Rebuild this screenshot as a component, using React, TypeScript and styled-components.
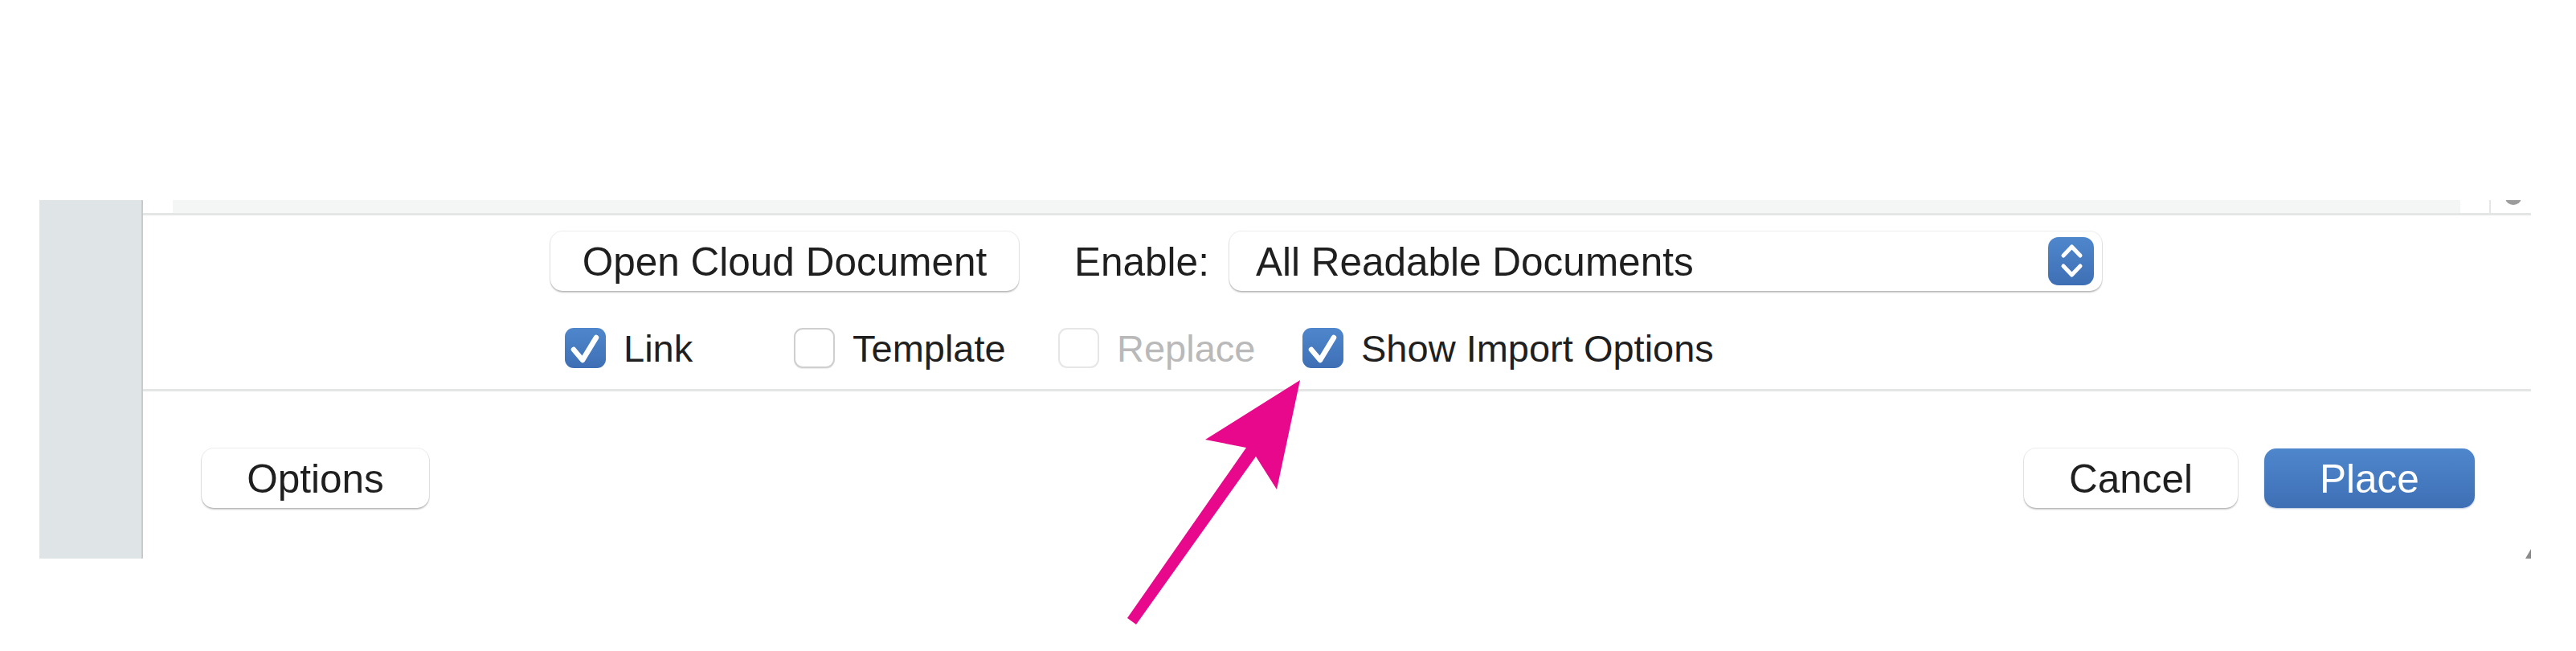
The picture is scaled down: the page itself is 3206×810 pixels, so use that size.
import styled, { createGlobalStyle } from 'styled-components';

const GlobalStyle = createGlobalStyle`
  html, body {
    margin: 0;
    padding: 0;
    background: #fff;
  }
  body {
    font-family: "Liberation Sans", Arial, sans-serif;
    color: #1f1f1f;
  }
`

function Check() {
  return (
    <svg width="51" height="50" viewBox="0 0 51 50">
      <path d="M11 27 L22 40 L39 12" fill="none" stroke="#fff" strokeWidth="6.5" strokeLinecap="round" strokeLinejoin="round" />
    </svg>
  )
}

function Chevrons() {
  return (
    <svg width="57" height="60" viewBox="0 0 57 60">
      <path d="M19 23 L29.5 12 L40 23" fill="none" stroke="#fff" strokeWidth="5" strokeLinecap="round" strokeLinejoin="round" />
      <path d="M19 36 L29.5 47 L40 36" fill="none" stroke="#fff" strokeWidth="5" strokeLinecap="round" strokeLinejoin="round" />
    </svg>
  )
}

function CheckItem({ label, checked, disabled, width }: { label: string; checked?: boolean; disabled?: boolean; width?: number }) {
  return (
    <Item $w={width}>
      <Box $checked={checked} $disabled={disabled}>{checked && <Check />}</Box>
      <ItemLabel $disabled={disabled}>{label}</ItemLabel>
    </Item>
  )
}

export default function App() {
  return (
    <Page>
      <GlobalStyle />
      <Window>
        <Sidebar />
        <Panel>
          <TopStrip>
            <StripGap $w={37} />
            <BrowserFill />
            <StripGap $w={36} />
            <ScrollTrack>
              <Knob />
            </ScrollTrack>
          </TopStrip>

          <Upper>
            <Row>
              <Button $w={583}>Open Cloud Document</Button>
              <FieldLabel>Enable:</FieldLabel>
              <Select>
                <span>All Readable Documents</span>
                <Stepper><Chevrons /></Stepper>
              </Select>
            </Row>
            <CheckRow>
              <CheckItem label="Link" checked width={285} />
              <CheckItem label="Template" width={329} />
              <CheckItem label="Replace" disabled width={304} />
              <CheckItem label="Show Import Options" checked />
            </CheckRow>
          </Upper>

          <Divider />

          <Footer>
            <Button $w={283}>Options</Button>
            <Spacer />
            <Button $w={266}>Cancel</Button>
            <Button $w={262} $primary>Place</Button>
          </Footer>
          <Grip />
        </Panel>
      </Window>

      <Arrow width="240" height="330" viewBox="1390 460 240 330">
        <polygon
          points="1618,473 1589,609 1563,568 1414,777 1403,769 1551,557 1500,547"
          fill="#e8088c"
        />
      </Arrow>
    </Page>
  )
}

const Page = styled.div`
  position: relative;
  width: 3206px;
  height: 810px;
  padding: 249px 0 0 49px;
  box-sizing: border-box;
  overflow: hidden;
`

const Window = styled.div`
  display: flex;
  width: 3101px;
  height: 446px;
`

const Sidebar = styled.div`
  width: 127px;
  background: #dfe4e7;
  border-right: 2px solid #c6cbce;
`

const Panel = styled.div`
  position: relative;
  flex: 1;
  display: flex;
  flex-direction: column;
  background: #fff;
`

const TopStrip = styled.div`
  display: flex;
  height: 16px;
  border-bottom: 3px solid #e4e5e5;
`

const StripGap = styled.div<{ $w: number }>`
  width: ${p => p.$w}px;
`

const BrowserFill = styled.div`
  width: 2847px;
  background: #f4f5f5;
`

const ScrollTrack = styled.div`
  position: relative;
  flex: 1;
  border-left: 2px solid #e6e6e6;
  overflow: hidden;
`

const Knob = styled.div`
  position: absolute;
  left: 18px;
  top: -12px;
  width: 20px;
  height: 18px;
  border-radius: 50%;
  background: #9c9c9c;
`

const Upper = styled.div`
  height: 216px;
  padding: 20px 0 0 507px;
  box-sizing: border-box;
`

const Row = styled.div`
  display: flex;
  align-items: center;
  height: 74px;
`

const Button = styled.div<{ $w: number; $primary?: boolean }>`
  display: flex;
  align-items: center;
  justify-content: center;
  width: ${p => p.$w}px;
  height: 74px;
  box-sizing: border-box;
  border-radius: 15px;
  font-size: 49.5px;
  color: ${p => (p.$primary ? '#fff' : '#1f1f1f')};
  background: ${p => (p.$primary ? 'linear-gradient(#4f87cc, #3e6fb5)' : '#fff')};
  box-shadow: ${p => (p.$primary
    ? '0 1px 2px rgba(30, 70, 140, 0.35)'
    : '0 0 0 1px rgba(0, 0, 0, 0.07), 0 2px 2px rgba(0, 0, 0, 0.22)')};
`

const FieldLabel = styled.span`
  margin: 0 25px 0 69px;
  font-size: 49.5px;
`

const Select = styled.div`
  display: flex;
  align-items: center;
  justify-content: space-between;
  width: 1086px;
  height: 74px;
  padding: 0 10px 0 33px;
  box-sizing: border-box;
  border-radius: 15px;
  font-size: 49.5px;
  background: #fff;
  box-shadow: 0 0 0 1px rgba(0, 0, 0, 0.07), 0 2px 2px rgba(0, 0, 0, 0.22);
`

const Stepper = styled.div`
  display: flex;
  width: 57px;
  height: 60px;
  border-radius: 13px;
  background: linear-gradient(#4f87cc, #3e6fb5);
`

const CheckRow = styled.div`
  display: flex;
  align-items: center;
  margin: 46px 0 0 18px;
  height: 50px;
`

const Item = styled.div<{ $w?: number }>`
  display: flex;
  align-items: center;
  gap: 22px;
  width: ${p => (p.$w ? `${p.$w}px` : 'auto')};
`

const Box = styled.div<{ $checked?: boolean; $disabled?: boolean }>`
  width: 51px;
  height: 50px;
  box-sizing: border-box;
  border-radius: 11px;
  background: ${p => (p.$checked ? 'linear-gradient(#4f87cc, #3e6fb5)' : '#fff')};
  border: ${p => (p.$checked ? 'none' : p.$disabled ? '2px solid #e6e6e6' : '2px solid #cfcfcf')};
  box-shadow: ${p => (p.$checked || p.$disabled ? 'none' : '0 1px 1px rgba(0, 0, 0, 0.08)')};
`

const ItemLabel = styled.span<{ $disabled?: boolean }>`
  font-size: 47px;
  color: ${p => (p.$disabled ? '#b9b9b9' : '#1f1f1f')};
`

const Divider = styled.div`
  height: 3px;
  background: #e4e5e5;
`

const Footer = styled.div`
  flex: 1;
  display: flex;
  align-items: flex-start;
  gap: 33px;
  padding: 71px 70px 0 73px;
`

const Spacer = styled.div`
  flex: 1;
`

const Grip = styled.div`
  position: absolute;
  right: 0;
  bottom: 0;
  width: 0;
  height: 0;
  border-left: 7px solid transparent;
  border-bottom: 12px solid #8a8a8a;
`

const Arrow = styled.svg`
  position: absolute;
  left: 1390px;
  top: 460px;
`
